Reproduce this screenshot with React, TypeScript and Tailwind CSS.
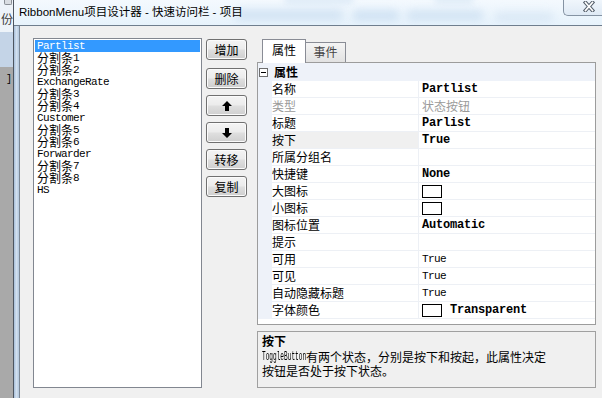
import React from "react";

const CJK = "font-['Noto_Sans_CJK_SC',sans-serif]";
const MONO = "font-['Liberation_Mono',monospace] text-[11px] tracking-[-0.6px]";
const MONO_B = "font-['Liberation_Mono',monospace] font-bold text-[12px] tracking-[-0.2px]";

function Mixed({ text, latin, cjk }: { text: string; latin: string; cjk?: string }) {
  const parts = text.match(/[\x00-\x7f]+|[^\x00-\x7f]+/g) || [];
  return (
    <>
      {parts.map((p, i) =>
        /^[\x00-\x7f]/.test(p) ? (
          <span key={i} className={latin}>
            {p}
          </span>
        ) : (
          <span key={i} className={cjk ?? CJK}>
            {p}
          </span>
        )
      )}
    </>
  );
}

const items = [
  "Partlist",
  "分割条1",
  "分割条2",
  "ExchangeRate",
  "分割条3",
  "分割条4",
  "Customer",
  "分割条5",
  "分割条6",
  "Forwarder",
  "分割条7",
  "分割条8",
  "HS",
];

type V =
  | { t: "bold"; s: string }
  | { t: "norm"; s: string }
  | { t: "gray"; s: string }
  | { t: "none" }
  | { t: "box" }
  | { t: "boxText"; s: string };

const rows: { name: string; v: V; gray?: boolean; sel?: boolean }[] = [
  { name: "名称", v: { t: "bold", s: "Partlist" } },
  { name: "类型", v: { t: "gray", s: "状态按钮" }, gray: true },
  { name: "标题", v: { t: "bold", s: "Parlist" } },
  { name: "按下", v: { t: "bold", s: "True" }, sel: true },
  { name: "所属分组名", v: { t: "none" } },
  { name: "快捷键", v: { t: "bold", s: "None" } },
  { name: "大图标", v: { t: "box" } },
  { name: "小图标", v: { t: "box" } },
  { name: "图标位置", v: { t: "bold", s: "Automatic" } },
  { name: "提示", v: { t: "none" } },
  { name: "可用", v: { t: "norm", s: "True" } },
  { name: "可见", v: { t: "norm", s: "True" } },
  { name: "自动隐藏标题", v: { t: "norm", s: "True" } },
  { name: "字体颜色", v: { t: "boxText", s: "Transparent" } },
];

function Value({ v }: { v: V }) {
  switch (v.t) {
    case "bold":
      return <span className={MONO_B + " text-black"}>{v.s}</span>;
    case "norm":
      return <span className={MONO + " text-black"}>{v.s}</span>;
    case "gray":
      return <span className={CJK + " text-[12px] text-[#9a9a9a]"}>{v.s}</span>;
    case "box":
      return <div className="h-[13px] w-[20px] border border-black bg-white" />;
    case "boxText":
      return (
        <div className="flex items-center">
          <div className="h-[13px] w-[20px] border border-black bg-white" />
          <span className={MONO_B + " ml-[8px] text-black"}>{v.s}</span>
        </div>
      );
    default:
      return null;
  }
}

const BTN =
  "flex h-[21px] w-[41px] items-center justify-center rounded-[3px] border border-[#707070] bg-[linear-gradient(180deg,#f4f4f4_0%,#ececec_45%,#dedede_55%,#cfcfcf_100%)] shadow-[inset_0_0_0_1px_#fbfbfb] text-[12px] text-black " +
  CJK;

function Arrow({ down }: { down?: boolean }) {
  return (
    <svg width="10" height="10" viewBox="0 0 10 10" className={down ? "rotate-180" : ""}>
      <path d="M5 0 L10 5 L7 5 L7 10 L3 10 L3 5 L0 5 Z" fill="#000" />
    </svg>
  );
}

export default function App() {
  return (
    <div className="flex h-[398px] w-[602px] overflow-hidden bg-[#f0f0f0]">
      {/* background application strip */}
      <div className="relative flex w-[13px] shrink-0 flex-col overflow-hidden">
        <div className="h-[32px] bg-[#edf3f9]" />
        <div className="h-[35px] bg-[#c4d4e7]" />
        <div className="flex-1 bg-[#a9a9a9]" />
        <div className="absolute left-[4px] top-0 h-[5px] w-[8px] rounded-b-[2px] border border-t-0 border-[#8a8f96] bg-[#d9dde2]" />
        <span className={"absolute left-[1px] top-[12px] text-[12px] leading-[14px] text-[#3a3a3a] " + CJK}>份</span>
        <span className="absolute left-[6px] top-[75px] font-['Liberation_Mono',monospace] text-[10px] leading-[10px] text-black">]</span>
      </div>
      <div className="w-px shrink-0 bg-[#4d5560]" />

      {/* window */}
      <div className="flex flex-1 flex-col">
        {/* title bar */}
        <div className="relative h-[25px] shrink-0 overflow-hidden bg-[linear-gradient(180deg,#f4f9fe,#e7f3fc)]">
          <div className="absolute left-[220px] top-[9px] h-[12px] w-[110px] rounded-full bg-[#c9ddf0] opacity-70 blur-[4px]" />
          <div className="absolute left-[338px] top-[10px] h-[11px] w-[48px] rounded-full bg-[#c4daef] opacity-70 blur-[4px]" />
          <div className="absolute left-[392px] top-[10px] h-[11px] w-[78px] rounded-full bg-[#c8dcf0] opacity-70 blur-[4px]" />
          <div className="absolute left-[480px] top-[12px] h-[10px] w-[60px] rounded-full bg-[#cfe0f1] opacity-60 blur-[4px]" />
          <div className="absolute left-[270px] top-[-4px] h-[8px] w-[70px] rounded-full bg-[#cfe1f2] opacity-60 blur-[3px]" />
          <div className="absolute left-[420px] top-[-4px] h-[8px] w-[40px] rounded-full bg-[#d2e3f2] opacity-60 blur-[3px]" />
          <div className="relative flex h-full items-center pl-[5px]">
            <span className="whitespace-nowrap text-[11.5px] text-black font-['Liberation_Sans','Noto_Sans_CJK_SC',sans-serif]">
              RibbonMenu项目设计器 - 快速访问栏 - 项目
            </span>
          </div>
          <div className="absolute right-0 top-0 h-[16px] w-[39px] rounded-bl-[5px] border-b border-l border-[#8593a3] bg-[linear-gradient(180deg,#f0f6fc,#dfeaf5)]">
            <svg className="absolute left-[19px] top-[1px]" width="12" height="11" viewBox="0 0 12 11">
              <path d="M2.5 1.5 L9.5 9.5 M9.5 1.5 L2.5 9.5" stroke="#56606c" strokeWidth="3.6" strokeLinecap="square" />
              <path d="M2.5 1.5 L9.5 9.5 M9.5 1.5 L2.5 9.5" stroke="#ffffff" strokeWidth="1.6" strokeLinecap="square" />
            </svg>
          </div>
        </div>
        <div className="h-px shrink-0 bg-[#6f7e8e]" />

        <div className="flex flex-1">
          <div className="w-[5px] shrink-0 bg-[linear-gradient(90deg,#a8bfd9,#d2e0ef,#b2c7de)]" />
          <div className="w-px shrink-0 bg-[#7c8794]" />

          {/* client area */}
          <div className="flex flex-1 bg-[#f0f0f0] pl-[13px] pt-[12px]">
            {/* list box */}
            <div className="h-[350px] w-[169px] shrink-0 border border-[#828790] bg-white pt-[1px]">
              {items.map((it, i) => (
                <div
                  key={i}
                  className={
                    "mx-px flex h-[12px] items-center whitespace-nowrap pl-[2px] text-[12px] leading-[12px] " +
                    (i === 0 ? "bg-[#3399ff] text-white" : "text-black")
                  }
                >
                  <Mixed text={it} latin={MONO} />
                </div>
              ))}
            </div>

            {/* buttons */}
            <div className="ml-[4px] mt-px flex w-[41px] shrink-0 flex-col">
              <button className={BTN}>增加</button>
              <button className={BTN + " mt-[8px]"}>删除</button>
              <button className={BTN + " mt-[6px]"}>
                <Arrow />
              </button>
              <button className={BTN + " mt-[6px]"}>
                <Arrow down />
              </button>
              <button className={BTN + " mt-[6px]"}>转移</button>
              <button className={BTN + " mt-[6px]"}>复制</button>
            </div>

            {/* tabs + property grid */}
            <div className="ml-[10px] mt-px flex w-[339px] shrink-0 flex-col">
              <div className="flex h-[23px] items-end">
                <div
                  className={
                    "relative z-10 -mb-px ml-[5px] flex h-[24px] w-[44px] justify-center border-l border-r border-t border-[#898c95] bg-white pt-[2px] text-[12px] leading-[16px] text-black " +
                    CJK
                  }
                >
                  属性
                </div>
                <div
                  className={
                    "flex h-[20px] w-[40px] justify-center border-r border-t border-[#898c95] bg-[linear-gradient(180deg,#f4f4f4,#e2e2e2)] pt-[1px] text-[12px] leading-[16px] text-[#444] " +
                    CJK
                  }
                >
                  事件
                </div>
              </div>

              <div className="flex h-[263px] flex-col border border-[#9c9c9c] bg-white">
                <div className="flex h-[18px] shrink-0 items-center bg-[#eef2f9]">
                  <div className="relative ml-px h-[9px] w-[9px] border border-[#6e6e6e] bg-white">
                    <div className="absolute left-[1px] top-[3px] h-px w-[5px] bg-black" />
                  </div>
                  <span className={"ml-[6px] text-[12px] font-bold leading-none text-black " + CJK}>属性</span>
                </div>
                {rows.map((r, i) => (
                  <div key={i} className="flex h-[17px] shrink-0">
                    <div className="w-[14px] shrink-0 bg-[#eef2f9]" />
                    <div
                      className={
                        "flex w-[146px] shrink-0 items-center border-b border-[#edf0f5] text-[12px] leading-none " +
                        CJK +
                        (r.gray ? " text-[#9a9a9a]" : " text-black") +
                        (r.sel ? " bg-[#f0f0f0]" : "")
                      }
                    >
                      {r.name}
                    </div>
                    <div className="flex flex-1 items-center border-b border-l border-[#edf0f5] pl-[3px] leading-none">
                      <Value v={r.v} />
                    </div>
                  </div>
                ))}
              </div>

              <div className="mt-[6px] h-[57px] border border-[#a0a0a0] bg-[#f0f0f0] px-[4px] pt-[2px]">
                <div className={"text-[12px] font-bold leading-[14px] text-black " + CJK}>按下</div>
                <div className={"whitespace-nowrap text-[12px] leading-[14px] text-black " + CJK}>
                  <span className="inline-block w-[44px] overflow-visible align-bottom">
                    <span className="inline-block origin-left scale-x-[0.51] font-['Liberation_Mono',monospace] text-[12px]">
                      ToggleButton
                    </span>
                  </span>
                  有两个状态，分别是按下和按起，此属性决定
                  <br />
                  按钮是否处于按下状态。
                </div>
              </div>
            </div>
          </div>
        </div>
      </div>
    </div>
  );
}
